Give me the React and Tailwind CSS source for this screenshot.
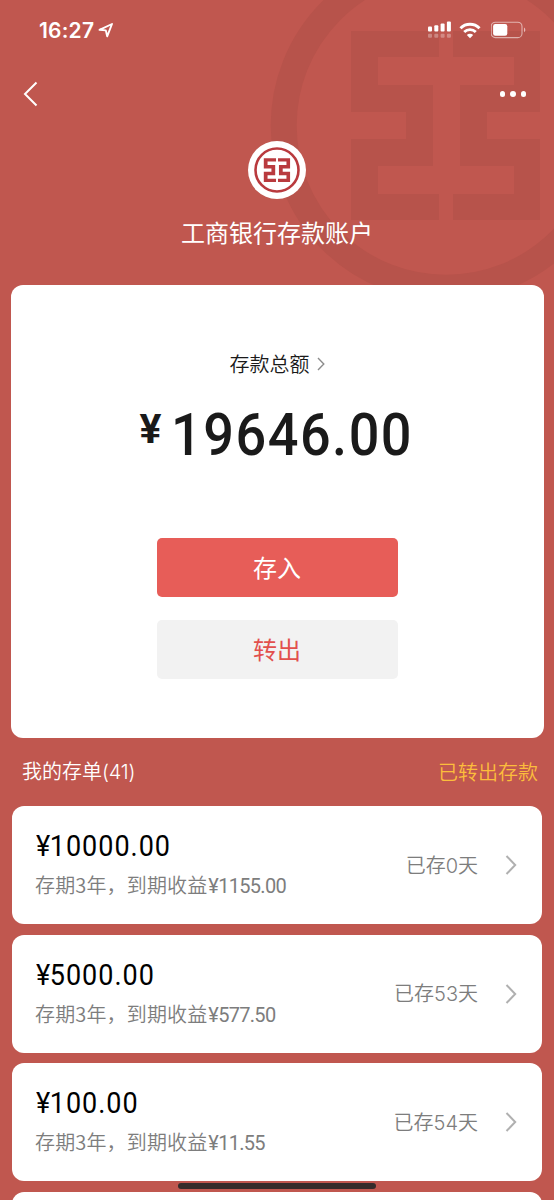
const deposits = [
  { id: 1, amount: "10000.00", years: 3, income: "1155.00", days: 0 },
  { id: 2, amount: "5000.00", years: 3, income: "577.50", days: 53 },
  { id: 3, amount: "100.00", years: 3, income: "11.55", days: 54 },
]

// Left and right halves of the bank mark, on a 189x189 square
const MARK_LEFT = "M0 0H88V26H27V54H82V135H27V163H88V189H0V108H55V81H0Z"
const MARK_RIGHT = "M102 0H189V81H136V108H189V189H102V163H163V135H109V54H163V26H102Z"

function Watermark() {
  return (
    <svg
      className="absolute top-0 right-0"
      width="284"
      height="302"
      viewBox="270 0 284 302"
      fill="none"
    >
      <circle cx="446" cy="125.5" r="162.3" stroke="#b7534b" strokeWidth="26" />
      <g transform="translate(351 31)" fill="#b7534b">
        <path d={MARK_LEFT} />
        <path d={MARK_RIGHT} />
      </g>
    </svg>
  )
}

function BankLogo() {
  return (
    <svg width="58" height="58" viewBox="0 0 58 58" fill="none">
      <circle cx="29" cy="29" r="29" fill="#fff" />
      <circle cx="29" cy="29" r="21.5" stroke="#b93a3e" strokeWidth="2.6" />
      <g transform="translate(15.8 17.2) scale(0.139 0.126)" fill="#b93a3e">
        <path d={MARK_LEFT} />
        <path d={MARK_RIGHT} />
      </g>
    </svg>
  )
}

function StatusBar() {
  return (
    <div className="flex h-[60px] shrink-0 items-center justify-between pl-[39px] pr-[28px] text-white">
      <div className="flex items-center">
        <span className="font-['Inter'] text-[21px] leading-none font-semibold tracking-[0.2px]">16:27</span>
        <svg className="ml-[4px]" width="16" height="16" viewBox="0 0 16 16" fill="none">
          <path
            d="M14 2L1.5 7.8L7.8 8.4L9.2 14.3Z"
            stroke="currentColor"
            strokeWidth="1.9"
            strokeLinejoin="round"
          />
        </svg>
      </div>
      <div className="flex items-center">
        <svg width="24" height="18" viewBox="0 0 24 18" fill="currentColor">
          <rect x="0" y="5.5" width="4" height="5" rx="1" />
          <rect x="6.3" y="4.2" width="4" height="6.3" rx="1" />
          <rect x="12.6" y="2.6" width="4" height="7.9" rx="1" />
          <rect x="18.9" y="0.5" width="4" height="10" rx="1" />
          <g opacity="0.3">
            <rect x="0" y="12.7" width="4" height="4" rx="1" />
            <rect x="6.3" y="12.7" width="4" height="4" rx="1" />
            <rect x="12.6" y="12.7" width="4" height="4" rx="1" />
            <rect x="18.9" y="12.7" width="4" height="4" rx="1" />
          </g>
        </svg>
        <svg className="ml-[7px] mr-px" width="22" height="17" viewBox="0 0 22 17" fill="none">
          <path d="M1.5 6.2A13.6 13.6 0 0 1 20.5 6.2" stroke="currentColor" strokeWidth="3" />
          <path d="M5.2 9.9A8.3 8.3 0 0 1 16.8 9.9" stroke="currentColor" strokeWidth="2.8" />
          <path d="M7.8 13A4.6 4.6 0 0 1 14.2 13L11 16.3Z" fill="currentColor" />
        </svg>
        <svg className="ml-[9px]" width="35" height="18" viewBox="0 0 35 18" fill="none">
          <rect x="0.2" y="1.2" width="30.8" height="15.4" rx="4.2" stroke="#fff" strokeOpacity="0.55" strokeWidth="1.1" />
          <rect x="2.1" y="3" width="14.2" height="11.8" rx="2.2" fill="#fff" />
          <path d="M33 6.5C34.8 7.3 34.8 10.5 33 11.3Z" fill="#fff" fillOpacity="0.6" />
        </svg>
      </div>
    </div>
  )
}

function NavBar() {
  return (
    <div className="flex h-[68px] shrink-0 items-center justify-between pl-[23px] pr-[28px] text-white">
      <svg width="15" height="26" viewBox="0 0 15 26" fill="none">
        <path d="M13.5 1.5L2 13L13.5 24.5" stroke="currentColor" strokeWidth="2" />
      </svg>
      <div className="flex gap-[5px]">
        <span className="size-[5.5px] rounded-full bg-white" />
        <span className="size-[5.5px] rounded-full bg-white" />
        <span className="size-[5.5px] rounded-full bg-white" />
      </div>
    </div>
  )
}

function DepositCard({ deposit }) {
  return (
    <div className="flex h-[118px] shrink-0 items-center justify-between rounded-[12px] bg-white pl-6 pr-[25px]">
      <div>
        <p className="origin-left scale-x-90 font-['Roboto'] text-[30px] leading-[34px] tracking-[1.1px] text-black">
          <span className="tracking-[-0.5px]">¥</span>
          {deposit.amount}
        </p>
        <p className="-ml-px mt-[7px] text-[20px] leading-[30px] font-[350] tracking-[0.15px] text-[#7d7d7d]">
          存期{deposit.years}年，到期收益
          <span className="ml-px font-['Roboto'] text-[20px] font-normal tracking-[-0.7px]">
            ¥{deposit.income}
          </span>
        </p>
      </div>
      <div className="flex items-center">
        <span className="text-[20px] leading-[30px] font-[350] text-[#7d7d7d]">
          已存<span className="font-['Inter'] font-light">{deposit.days}</span>天
        </span>
        <svg className="ml-[27px]" width="12" height="20" viewBox="0 0 12 20" fill="none">
          <path d="M1.5 1L10.2 10L1.5 19" stroke="#b0b0b0" strokeWidth="2" />
        </svg>
      </div>
    </div>
  )
}

export default function App() {
  return (
    <div className="relative h-[1200px] w-[554px] overflow-hidden bg-[#c0574f] font-['Noto_Sans_CJK_SC',sans-serif]">
      <Watermark />

      <div className="relative flex h-full flex-col">
        <StatusBar />
        <NavBar />

        {/* Bank name */}
        <div className="flex h-[157px] shrink-0 flex-col items-center pt-[13px]">
          <BankLogo />
          <h1 className="mt-[15px] text-[24px] leading-[36px] text-white">工商银行存款账户</h1>
        </div>

        {/* Balance */}
        <div className="mx-auto flex h-[453px] w-[533px] shrink-0 flex-col items-center rounded-[12px] bg-white pt-[64px]">
          <div className="flex items-center text-[#1a1a1a]">
            <span className="text-[20px] leading-[30px] font-[350]">存款总额</span>
            <svg className="ml-[7px]" width="8" height="14" viewBox="0 0 8 14" fill="none">
              <path d="M1 1L6.8 7L1 13" stroke="#8c8c8c" strokeWidth="1.4" />
            </svg>
          </div>
          <div className="mt-[20px] flex h-[72px] items-start font-['Roboto'] text-[#1a1a1a]">
            <span className="mt-[6px] text-[41px] leading-[48px] font-bold">¥</span>
            <span className="-mr-[25px] ml-[9px] origin-left scale-x-90 text-[60px] leading-[72px] font-medium tracking-[1.7px]">
              19646.00
            </span>
          </div>
          <button className="mt-[67px] h-[59px] w-[241px] shrink-0 rounded-[5px] bg-[#e75d58] pb-[2px] text-[24px] text-white">
            存入
          </button>
          <button className="mt-[23px] h-[59px] w-[241px] shrink-0 rounded-[5px] bg-[#f2f2f2] pb-[2px] text-[24px] text-[#e2504d]">
            转出
          </button>
        </div>

        {/* List heading */}
        <div className="flex h-[68px] shrink-0 items-center justify-between pl-[22px] pr-[16px] text-[20px] font-[350]">
          <span className="pb-px text-white">
            我的存单<span className="font-['Inter'] font-light tracking-[-0.2px]">(41)</span>
          </span>
          <span className="text-[#fcbd3c]">已转出存款</span>
        </div>

        {/* Deposits */}
        <div className="flex shrink-0 flex-col gap-[10.5px] pl-[12px] pr-[12px]">
          {deposits.map((deposit) => (
            <DepositCard key={deposit.id} deposit={deposit} />
          ))}
          <div className="h-[118px] shrink-0 rounded-[12px] bg-white" />
        </div>
      </div>

      {/* Home indicator */}
      <div className="absolute bottom-[11px] left-[178px] h-[6.5px] w-[198px] rounded-full bg-[#352c2b]" />
    </div>
  )
}
